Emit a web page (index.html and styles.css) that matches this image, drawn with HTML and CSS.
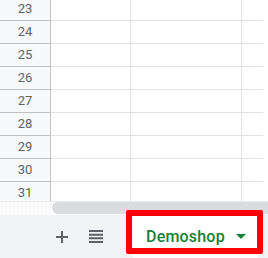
FILE: index.html
```html
<!DOCTYPE html>
<html lang="en">
<head>
    <meta charset="UTF-8">
    <title>Sheet tabs</title>
    <link rel="stylesheet" href="styles.css">
</head>
<body>
    <div class="sheet">
        <div class="grid">
            <div class="row"><div class="num">23</div><div class="cell c1"></div><div class="cell c2"></div><div class="cell c3"></div></div>
            <div class="row"><div class="num">24</div><div class="cell c1"></div><div class="cell c2"></div><div class="cell c3"></div></div>
            <div class="row"><div class="num">25</div><div class="cell c1"></div><div class="cell c2"></div><div class="cell c3"></div></div>
            <div class="row"><div class="num">26</div><div class="cell c1"></div><div class="cell c2"></div><div class="cell c3"></div></div>
            <div class="row"><div class="num">27</div><div class="cell c1"></div><div class="cell c2"></div><div class="cell c3"></div></div>
            <div class="row"><div class="num">28</div><div class="cell c1"></div><div class="cell c2"></div><div class="cell c3"></div></div>
            <div class="row"><div class="num">29</div><div class="cell c1"></div><div class="cell c2"></div><div class="cell c3"></div></div>
            <div class="row"><div class="num">30</div><div class="cell c1"></div><div class="cell c2"></div><div class="cell c3"></div></div>
            <div class="row"><div class="num">31</div><div class="cell c1"></div><div class="cell c2"></div><div class="cell c3"></div></div>
        </div>

        <!-- horizontal scrollbar -->
        <div class="hscroll">
            <div class="corner"></div>
            <div class="track"><div class="thumb"></div></div>
        </div>

        <!-- sheet tabs -->
        <div class="tabbar">
            <div class="tool add">
                <svg width="12" height="12" viewBox="0 0 12 12"><path d="M5 0h2v5h5v2H7v5H5V7H0V5h5z" fill="#5f6368"/></svg>
            </div>
            <div class="tool all">
                <svg width="14" height="13" viewBox="0 0 14 13"><path d="M0 0h14v2H0zM0 3.7h14v2H0zM0 7.3h14v2H0zM0 11h14v2H0z" fill="#5f6368"/></svg>
            </div>
            <div class="tab active">
                <span class="tab-name">Demoshop</span>
                <span class="caret"></span>
            </div>
        </div>

        <div class="highlight"></div>
    </div>
</body>
</html>
```

FILE: styles.css
```css
body {
    margin: 0;
    font-family: Roboto, "Liberation Sans", Arial, sans-serif;
    background: white;
}

.sheet {
    position: relative;
    width: 268px;
    height: 258px;
    overflow: hidden;
}

.grid {
    height: 201px;
    overflow: hidden;
}

.row {
    display: flex;
    height: 23px;
}

.row:first-child {
    margin-top: -2px;
}

.num {
    width: 51px;
    box-sizing: border-box;
    background: #f8f9fa;
    border-right: 1px solid #c0c0c0;
    border-bottom: 1px solid #c0c0c0;
    color: #5f6368;
    font-size: 13px;
    text-align: center;
    line-height: 22px;
}

.cell {
    box-sizing: border-box;
    border-bottom: 1px solid #e2e3e3;
    border-right: 1px solid #e2e3e3;
}

.c1 { width: 80px; }
.c2 { width: 111px; }
.c3 { width: 21px; border-right: none; }

.hscroll {
    display: flex;
    height: 14px;
    border-top: 1px solid #e8eaed;
    box-sizing: border-box;
}

.corner {
    flex-shrink: 0;
    width: 51px;
    background: #fbfbfc;
    background-image: radial-gradient(#eeeef0 0.6px, transparent 0.8px);
    background-size: 4px 4px;
}

.track {
    flex: 1;
    min-width: 0;
    overflow: hidden;
    padding: 0 0 1px 1px;
    background: white;
}

.thumb {
    height: 12px;
    width: 230px;
    border-radius: 6px;
    background: #dadce0;
}

.tabbar {
    display: flex;
    align-items: center;
    height: 43px;
    background: #f1f3f4;
}

.tool {
    display: flex;
}

.add {
    margin-left: 56px;
}

.all {
    margin-left: 21px;
}

.tab {
    display: flex;
    align-items: center;
    align-self: stretch;
    width: 125px;
    margin-left: 30px;
    box-sizing: border-box;
    padding-left: 13px;
    background: white;
}

.tab-name {
    color: #188038;
    font-size: 16px;
    font-weight: 500;
    letter-spacing: 0.2px;
}

.caret {
    margin-left: 11px;
    width: 0;
    height: 0;
    border-left: 5px solid transparent;
    border-right: 5px solid transparent;
    border-top: 5px solid #188038;
}

.highlight {
    position: absolute;
    left: 126px;
    top: 210px;
    width: 137px;
    height: 44px;
    box-sizing: border-box;
    border: 6px solid #ff0000;
    border-radius: 2px;
}
```
